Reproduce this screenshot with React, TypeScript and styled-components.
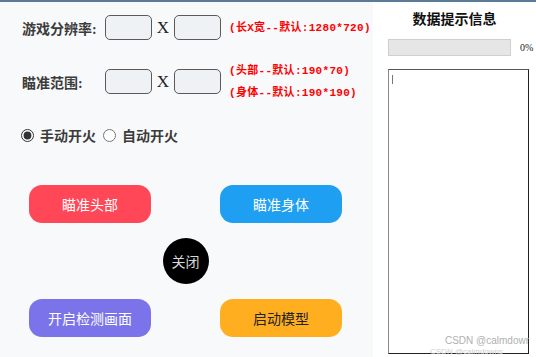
import React from "react"
import styled, { createGlobalStyle } from "styled-components"

const GlobalStyle = createGlobalStyle`
  html, body {
    margin: 0;
    padding: 0;
    background: #ffffff;
  }
  body {
    font-family: "Noto Sans CJK SC", "Noto Sans", sans-serif;
  }
`

const SANS = `"Noto Sans CJK SC", "Noto Sans", sans-serif`
const LABEL = `"Liberation Serif", "Noto Sans CJK SC", serif`
const MONO = `"Liberation Mono", "Noto Sans CJK SC", monospace`

const buttons = [
  { text: "瞄准头部", bg: "#ff4757", color: "#ffffff" },
  { text: "瞄准身体", bg: "#1e9ff2", color: "#ffffff" },
  { text: "开启检测画面", bg: "#7b73ea", color: "#ffffff" },
  { text: "启动模型", bg: "#ffae1f", color: "#222222" },
]

const App = () => (
  <>
    <GlobalStyle />
    <Window>
      <LeftPanel>
        <FormRow>
          <Label>游戏分辨率:</Label>
          <SizeInput />
          <Times>X</Times>
          <SizeInput />
          <Hints>
            <Hint>(长X宽--默认:1280*720)</Hint>
          </Hints>
        </FormRow>

        <FormRow $top={29}>
          <Label>瞄准范围:</Label>
          <SizeInput />
          <Times>X</Times>
          <SizeInput />
          <Hints>
            <Hint>(头部--默认:190*70)</Hint>
            <Hint>(身体--默认:190*190)</Hint>
          </Hints>
        </FormRow>

        <RadioRow>
          <RadioLabel>
            <input type="radio" name="fire" defaultChecked />
            手动开火
          </RadioLabel>
          <RadioLabel>
            <input type="radio" name="fire" />
            自动开火
          </RadioLabel>
        </RadioRow>

        <ButtonGrid>
          <ActionButton $bg={buttons[0].bg} $color={buttons[0].color}>{buttons[0].text}</ActionButton>
          <ActionButton $bg={buttons[1].bg} $color={buttons[1].color}>{buttons[1].text}</ActionButton>
          <CloseButton>关闭</CloseButton>
          <ActionButton $bg={buttons[2].bg} $color={buttons[2].color}>{buttons[2].text}</ActionButton>
          <ActionButton $bg={buttons[3].bg} $color={buttons[3].color}>{buttons[3].text}</ActionButton>
        </ButtonGrid>
      </LeftPanel>

      <RightPanel>
        <Title>数据提示信息</Title>
        <ProgressRow>
          <ProgressBar />
          <Percent>0%</Percent>
        </ProgressRow>
        <LogBox>
          <Caret />
        </LogBox>
      </RightPanel>

      <Watermark>CSDN @calmdowr</Watermark>
      <WatermarkGhost>CSDN @calmdowns</WatermarkGhost>
    </Window>
  </>
)

export default App


const Window = styled.div`
  position: relative;
  width: 536px;
  height: 357px;
  display: flex;
  border-top: 2px solid #5b7a96;
  box-sizing: border-box;
  overflow: hidden;
`
const LeftPanel = styled.div`
  width: 373px;
  background: #f8f9fb;
  padding: 13px 0 0 22px;
  box-sizing: border-box;
  display: flex;
  flex-direction: column;
`
const FormRow = styled.div<{ $top?: number }>`
  display: flex;
  align-items: center;
  margin-top: ${p => p.$top || 0}px;
  height: 25px;
`
const Label = styled.div`
  width: 83px;
  font-family: ${LABEL};
  font-weight: bold;
  font-size: 14px;
  color: #3c3c3c;
`
const SizeInput = styled.input`
  width: 47px;
  height: 25px;
  box-sizing: border-box;
  border: 1px solid #5a5a5a;
  border-radius: 5px;
  background: #eff2f5;
  padding: 0;
`
const Times = styled.span`
  width: 22px;
  text-align: center;
  font-family: ${LABEL};
  font-size: 17px;
  color: #222;
`
const Hints = styled.div`
  display: flex;
  flex-direction: column;
  gap: 6px;
  margin-left: 8px;
`
const Hint = styled.div`
  font-family: ${MONO};
  font-weight: bold;
  font-size: 11px;
  line-height: 16px;
  letter-spacing: 0.3px;
  color: #ff0000;
  white-space: nowrap;
`
const RadioRow = styled.div`
  display: flex;
  gap: 8px;
  margin-top: 31px;
  height: 20px;
  align-items: center;
`
const RadioLabel = styled.label`
  display: flex;
  align-items: center;
  gap: 6px;
  font-family: ${LABEL};
  font-weight: bold;
  font-size: 14px;
  color: #3c3c3c;

  & > input {
    margin: 0 0 0 -1px;
    width: 13px;
    height: 13px;
    accent-color: #333;
  }
`
const ButtonGrid = styled.div`
  display: grid;
  grid-template-columns: 122px 122px;
  grid-template-rows: 38px 46px 38px;
  column-gap: 69px;
  row-gap: 15px;
  margin: 40px 0 0 7px;
`
const ActionButton = styled.button<{ $bg: string; $color: string }>`
  border: none;
  border-radius: 13px;
  background: ${p => p.$bg};
  color: ${p => p.$color};
  font-family: ${SANS};
  font-size: 14px;
  padding: 0;
`
const CloseButton = styled.button`
  grid-column: 1 / span 2;
  justify-self: center;
  width: 46px;
  height: 46px;
  border-radius: 50%;
  border: none;
  background: #000;
  color: #d8d8d8;
  font-family: ${SANS};
  font-size: 14px;
  padding: 0;
`
const RightPanel = styled.div`
  flex: 1;
  background: #ffffff;
  padding: 8px 0 0 15px;
  display: flex;
  flex-direction: column;
`
const Title = styled.div`
  width: 133px;
  text-align: center;
  font-family: ${LABEL};
  font-weight: bold;
  font-size: 14px;
  color: #111;
  line-height: 20px;
`
const ProgressRow = styled.div`
  display: flex;
  align-items: center;
  margin-top: 9px;
`
const ProgressBar = styled.div`
  width: 123px;
  height: 17px;
  box-sizing: border-box;
  background: #e6e6e6;
  border: 1px solid #cfcfcf;
`
const Percent = styled.span`
  margin-left: 9px;
  font-family: "Liberation Serif", serif;
  font-size: 10px;
  color: #222222;
`
const LogBox = styled.div`
  margin-top: 13px;
  width: 141px;
  height: 285px;
  box-sizing: border-box;
  border: 1px solid #222;
  border-left-color: #888;
  border-top-color: #555;
  padding: 5px 0 0 3px;
`
const Caret = styled.div`
  width: 1px;
  height: 9px;
  background: #777;
`
const Watermark = styled.div`
  position: absolute;
  right: 7px;
  top: 333px;
  font-family: "Liberation Sans", sans-serif;
  font-size: 10px;
  line-height: 12px;
  color: #b0b0b0;
  white-space: nowrap;
`
const WatermarkGhost = styled.div`
  position: absolute;
  left: 430px;
  top: 345px;
  font-family: "Liberation Sans", sans-serif;
  font-size: 8px;
  line-height: 9px;
  color: #cfcfcf;
  white-space: nowrap;
`
